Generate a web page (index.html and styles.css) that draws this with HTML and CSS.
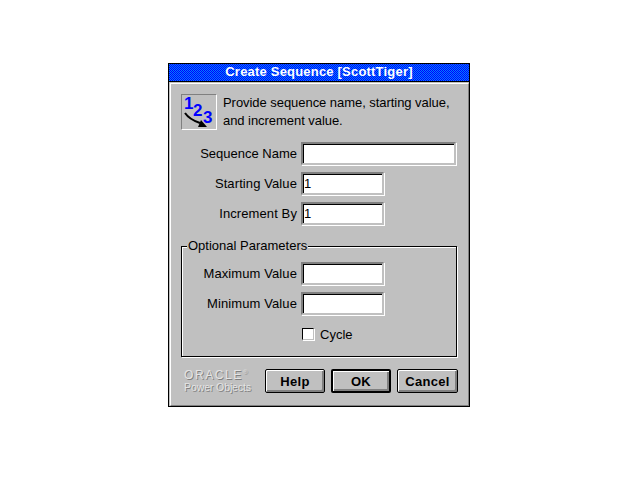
FILE: index.html
```html
<!DOCTYPE html>
<html lang="en">
<head>
<meta charset="utf-8">
<title>Create Sequence</title>
<link rel="stylesheet" href="styles.css">
</head>
<body>
<div class="dialog">
  <div class="titlebar">Create Sequence [ScottTiger]</div>
  <div class="frame">
    <div class="intro">
      <div class="icon">
        <svg width="36" height="36" viewBox="0 0 36 36">
          <text x="3" y="15" class="digit">1</text>
          <text x="12" y="22" class="digit">2</text>
          <text x="22" y="29" class="digit">3</text>
          <path d="M4 19 C8 25 13 27 19 29" fill="none" stroke="#000" stroke-width="2"/>
          <path d="M17 33 L26 33 L20 26 Z" fill="#000"/>
        </svg>
      </div>
      <p class="intro-text">Provide sequence name, starting value,<br>and increment value.</p>
    </div>
    <div class="row row-name">
      <label class="label">Sequence Name</label>
      <div class="field field-wide"></div>
    </div>
    <div class="row row-start">
      <label class="label label-spaced">Starting Value</label>
      <div class="field">1</div>
    </div>
    <div class="row row-inc">
      <label class="label label-spaced">Increment By</label>
      <div class="field">1</div>
    </div>
    <div class="group">
      <div class="legend">Optional Parameters</div>
      <div class="row row-max">
        <label class="label label-spaced">Maximum Value</label>
        <div class="field"></div>
      </div>
      <div class="row row-min">
        <label class="label label-spaced">Minimum Value</label>
        <div class="field"></div>
      </div>
      <div class="check-row"><span class="check"></span><span>Cycle</span></div>
    </div>
    <div class="footer">
      <div class="logo">
        <span class="logo-oracle">ORACLE<sup>®</sup></span>
        <span class="logo-sub">Power Objects</span>
      </div>
      <div class="btn btn-help"><span>Help</span></div>
      <div class="btn btn-ok"><span>OK</span></div>
      <div class="btn btn-cancel"><span>Cancel</span></div>
    </div>
  </div>
</div>
</body>
</html>
```
FILE: styles.css
```css
html, body { margin: 0; padding: 0; background: #fff; }
body { width: 640px; height: 480px; font-family: "Liberation Sans", Arial, sans-serif; font-size: 13px; color: #000; overflow: hidden; }
.dialog { box-sizing: border-box; width: 302px; height: 344px; margin: 63px 0 0 168px; border: 1px solid #000; background: #c0c0c0; display: flex; flex-direction: column; }
.titlebar { height: 17px; flex: none; border-bottom: 1px solid #000; color: #fff; font-weight: bold; font-size: 13px; letter-spacing: 0.2px; line-height: 16px; text-align: center; background-color: #0000ff; background-image: conic-gradient(#0000ff 25%, #0080ff 0 50%, #0000ff 0 75%, #0080ff 0); background-size: 2px 2px; }
.frame { flex: 1; box-sizing: border-box; margin: 1px 0 0 1px; border-top: 1px solid #fff; border-left: 1px solid #fff; border-right: 1px solid #808080; border-bottom: 1px solid #808080; display: flex; flex-direction: column; padding: 10px 10px 0 10px; }
.intro { display: flex; gap: 6px; height: 36px; }
.icon { box-sizing: border-box; width: 36px; height: 36px; border: 1px solid; border-color: #808080 #fff #fff #808080; }
.icon svg { display: block; margin: -1px; }
.digit { font: bold 17px "Liberation Sans", sans-serif; fill: #0000ff; }
.intro-text { margin: 0; line-height: 18px; white-space: nowrap; letter-spacing: -0.05px; }
.row { display: flex; justify-content: flex-end; align-items: center; gap: 4px; height: 23px; width: 203px; }
.row-name { width: 275px; margin-top: 12px; }
.row-start { margin-top: 7px; }
.row-inc { margin-top: 7px; }
.label { line-height: 16px; }
.label-spaced { letter-spacing: 0.1px; }
.field { box-sizing: border-box; width: 83px; height: 23px; background: #fff; border: 2px solid; border-color: #808080 #c0c0c0 #c0c0c0 #808080; box-shadow: inset 1px 1px 0 #000, 1px 1px 0 #fff; padding-left: 1px; line-height: 19px; }
.field-wide { width: 155px; }
.group { position: relative; box-sizing: border-box; width: 276px; height: 111px; margin-top: 21px; border: 1px solid #000; box-shadow: 1px 1px 0 #fff, inset 1px 1px 0 #fff; padding-top: 15px; }
.legend { position: absolute; left: 5px; top: -9px; padding: 0 1px; background: #c0c0c0; line-height: 16px; }
.row-max { width: 202px; }
.row-min { width: 202px; margin-top: 7px; }
.check-row { display: flex; align-items: center; gap: 6px; margin: 11px 0 0 120px; height: 16px; }
.check { box-sizing: border-box; width: 12px; height: 12px; background: #fff; border: 1px solid; border-color: #000 #c0c0c0 #c0c0c0 #000; box-shadow: 1px 1px 0 #fff; }
.footer { display: flex; align-items: flex-start; margin-top: 12px; }
.logo { width: 81px; display: flex; flex-direction: column; margin: 0 0 0 3px; color: #e4e4e4; text-shadow: 1px 1px 0 #808080; white-space: nowrap; }
.logo-oracle { font-size: 12px; letter-spacing: 1.6px; line-height: 12px; }
.logo-oracle sup { font-size: 6px; line-height: 0; }
.logo-sub { font-size: 10.5px; line-height: 13px; letter-spacing: -0.1px; }
.btn { box-sizing: border-box; height: 24px; width: 60px; border: 1px solid #000; border-radius: 2px; background: #c0c0c0; box-shadow: inset 1px 1px 0 #fff, inset -2px -2px 0 #808080; font-weight: bold; font-size: 13px; letter-spacing: 0.3px; display: flex; align-items: center; justify-content: center; margin-right: 6px; }
.btn-ok { border-width: 2px; }
.btn-cancel { margin-right: 0; width: 61px; }
```
